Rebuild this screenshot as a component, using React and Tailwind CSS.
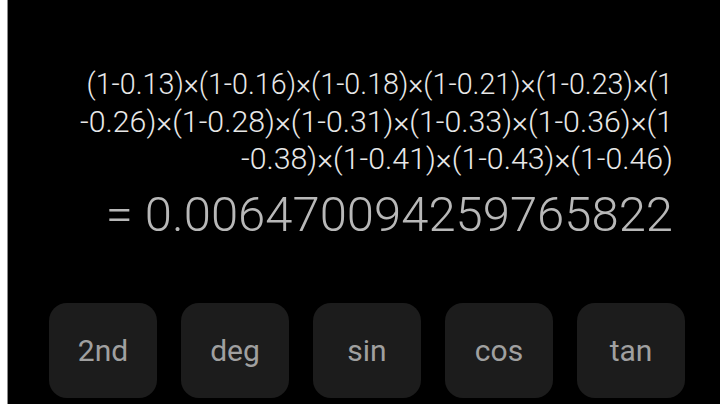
import React from "react";

const lines = [
  { text: "(1-0.13)×(1-0.16)×(1-0.18)×(1-0.21)×(1-0.23)×(1", size: "text-[28.7px]" },
  { text: "-0.26)×(1-0.28)×(1-0.31)×(1-0.33)×(1-0.36)×(1", size: "text-[30.3px]" },
  { text: "-0.38)×(1-0.41)×(1-0.43)×(1-0.46)", size: "text-[30.3px]" },
];

const keys = ["2nd", "deg", "sin", "cos", "tan"];

const App = () => {
  return (
    <div className="flex h-[404px] w-[720px] overflow-hidden bg-white font-['Roboto',sans-serif]">
      <div className="w-[7px] shrink-0" />
      <div className="flex flex-1 flex-col border-l border-[#8a8a8a] bg-black">
        {/* Expression */}
        <div className="pt-[66px] pr-[47px] text-right">
          {lines.map((line) => (
            <div
              key={line.text}
              className={`${line.size} leading-[37px] font-light whitespace-nowrap text-[#e8e8e8]`}
            >
              {line.text}
            </div>
          ))}
          <div className="mt-[10px] text-[49px] leading-[56px] font-light whitespace-nowrap text-[#b8b8b8]">
            = 0.006470094259765822
          </div>
        </div>

        {/* Function keys */}
        <div className="mt-auto flex gap-[24px] pl-[41px] pb-[6px]">
          {keys.map((k) => (
            <button
              key={k}
              className="flex h-[95px] w-[108px] items-center justify-center rounded-[18px] bg-[#1c1c1c] text-[30px] text-[#a0a0a0]"
            >
              {k}
            </button>
          ))}
        </div>
      </div>
    </div>
  );
};

export default App;
